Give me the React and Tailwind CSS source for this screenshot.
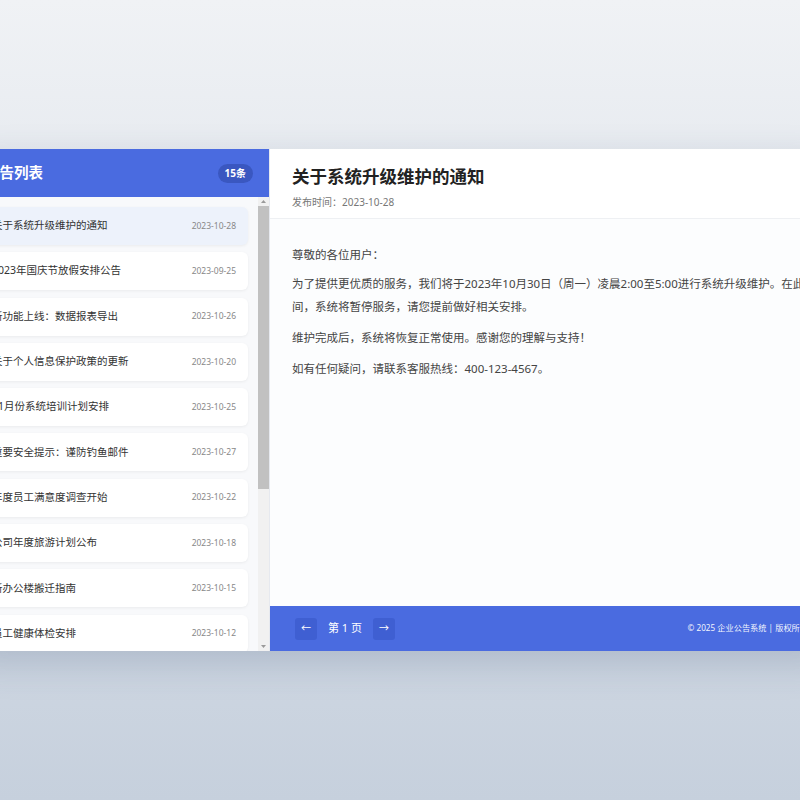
import { useState } from "react";

const notices = [
  { title: "关于系统升级维护的通知", date: "2023-10-28" },
  { title: "2023年国庆节放假安排公告", date: "2023-09-25" },
  { title: "新功能上线：数据报表导出", date: "2023-10-26" },
  { title: "关于个人信息保护政策的更新", date: "2023-10-20" },
  { title: "11月份系统培训计划安排", date: "2023-10-25" },
  { title: "重要安全提示：谨防钓鱼邮件", date: "2023-10-27" },
  { title: "年度员工满意度调查开始", date: "2023-10-22" },
  { title: "公司年度旅游计划公布", date: "2023-10-18" },
  { title: "新办公楼搬迁指南", date: "2023-10-15" },
  { title: "员工健康体检安排", date: "2023-10-12" },
  { title: "年终总结会议通知", date: "2023-10-10" },
  { title: "办公用品申领流程调整", date: "2023-10-08" },
  { title: "信息安全培训通知", date: "2023-10-05" },
  { title: "食堂菜单更新公告", date: "2023-09-30" },
  { title: "中秋节福利发放通知", date: "2023-09-28" },
];

function Arrow({ down }) {
  return (
    <svg width="5" height="3" viewBox="0 0 5 3" className={down ? "rotate-180" : ""}>
      <path d="M2.5 0 L5 3 L0 3 Z" fill="#9a9a9a" />
    </svg>
  );
}

export default function App() {
  const [active, setActive] = useState(0);
  const current = notices[active];

  return (
    <div className="w-full h-screen overflow-hidden flex items-center justify-center bg-gradient-to-b from-[#f0f2f5] to-[#c6d0dd] font-['Noto_Sans','Noto_Sans_CJK_SC',sans-serif] text-[#333]">
      <div className="shrink-0 w-[864px] h-[502px] flex bg-white rounded-lg overflow-hidden shadow-[0_12px_36px_rgba(60,80,120,0.22)]">
        {/* left: list */}
        <div className="w-[302px] shrink-0 min-h-0 flex flex-col bg-[#f8f9fb] border-r border-[#e6e9ef]">
          <div className="h-[48px] shrink-0 flex items-center justify-between pl-[17px] pr-[16px] bg-[#4a6be0] text-white">
            <h2 className="text-[14.5px] font-bold">公告列表</h2>
            <span className="px-[7px] py-[2px] rounded-full bg-[#3a57c0] text-[10px] font-bold">15条</span>
          </div>
          <div className="flex-1 min-h-0 flex">
            <ul className="flex-1 min-h-0 overflow-hidden pl-3 pr-[10px] pt-[10px] pb-2 flex flex-col gap-[7.3px]">
              {notices.map((n, i) => (
                <li
                  key={i}
                  onClick={() => setActive(i)}
                  className={`h-[38px] shrink-0 flex items-center justify-between px-3 rounded-md cursor-pointer shadow-[0_1px_3px_rgba(0,0,0,0.06)] ${
                    i === active ? "bg-[#edf2fb]" : "bg-white"
                  }`}
                >
                  <span className="text-[10.5px] text-[#333] truncate">{n.title}</span>
                  <span className="text-[8.5px] text-[#888] shrink-0 ml-2">{n.date}</span>
                </li>
              ))}
            </ul>
            {/* scrollbar */}
            <div className="w-[11px] shrink-0 flex flex-col bg-[#f1f1f1]">
              <div className="h-[9px] flex items-center justify-center">
                <Arrow />
              </div>
              <div className="h-[283px] bg-[#c1c1c1]" />
              <div className="flex-1" />
              <div className="h-[9px] flex items-center justify-center">
                <Arrow down />
              </div>
            </div>
          </div>
        </div>

        {/* right: detail */}
        <div className="flex-1 flex flex-col bg-[#fcfdfe]">
          <div className="h-[70px] shrink-0 px-[22px] pt-[14px] bg-white border-b border-[#eef0f3]">
            <h1 className="text-[17.5px] font-bold text-[#222] leading-[26px]">{current.title}</h1>
            <p className="mt-[6px] text-[10px] text-[#777]">发布时间：{current.date}</p>
          </div>
          <div className="flex-1 pl-[22px] pr-[8px] pt-[24px] text-[11.5px] leading-[23px] text-[#444]">
            <p className="mb-[6px]">尊敬的各位用户：</p>
            <p className="mb-[8px]">
              为了提供更优质的服务，我们将于2023年10月30日（周一）凌晨2:00至5:00进行系统升级维护。在此期间，系统将暂停服务，请您提前做好相关安排。
            </p>
            <p className="mb-[8px]">维护完成后，系统将恢复正常使用。感谢您的理解与支持！</p>
            <p>如有任何疑问，请联系客服热线：400-123-4567。</p>
          </div>
          <div className="h-[45px] shrink-0 flex items-center justify-between pl-[25px] pr-[24px] bg-[#4a6be0] text-white">
            <div className="flex items-center gap-[11px]">
              <button className="w-[22px] h-[22px] rounded-[3px] bg-[#3f5fd2] text-[10px] flex items-center justify-center">←</button>
              <span className="text-[11px]">第 1 页</span>
              <button className="w-[22px] h-[22px] rounded-[3px] bg-[#3f5fd2] text-[10px] flex items-center justify-center">→</button>
            </div>
            <span className="text-[8.2px] text-white/95">© 2025 企业公告系统 | 版权所有</span>
          </div>
        </div>
      </div>
    </div>
  );
}
